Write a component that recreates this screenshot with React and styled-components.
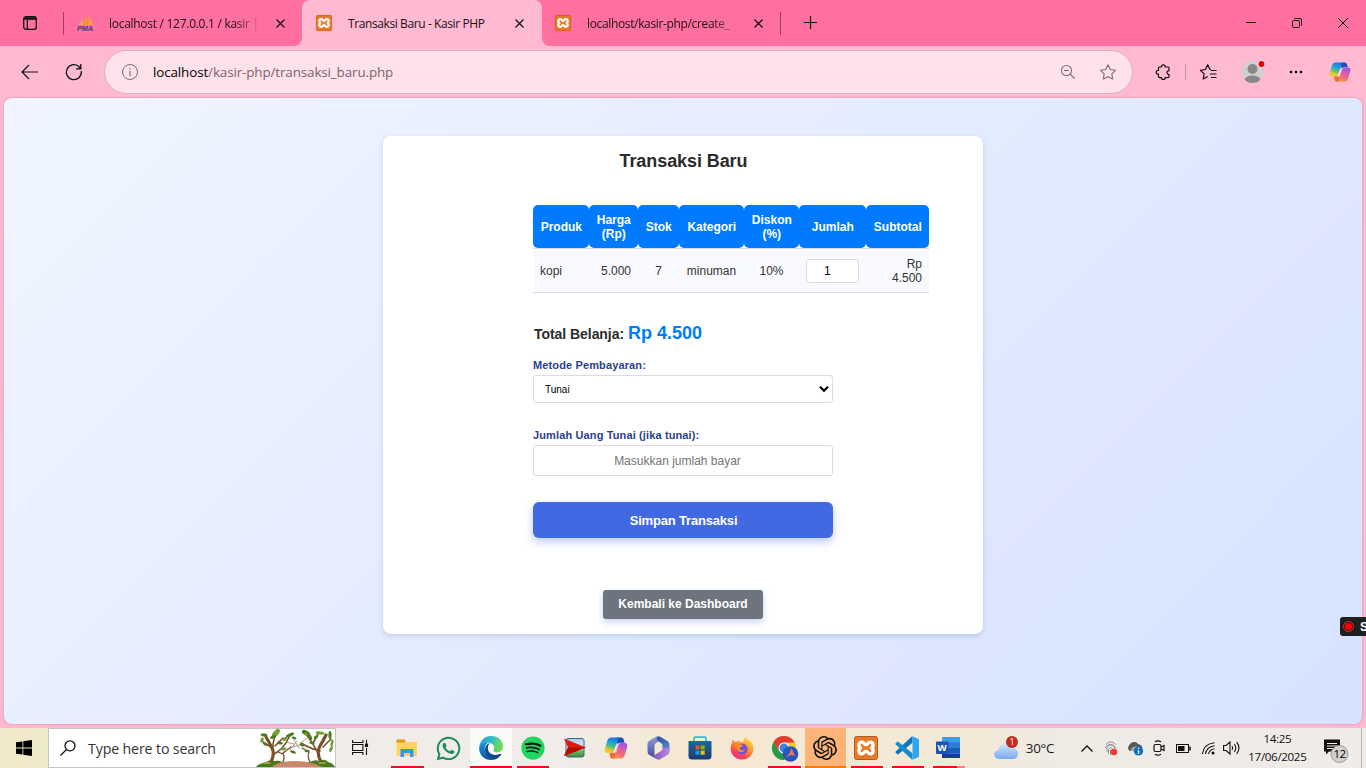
import React from "react";
import styled, { createGlobalStyle, css } from "styled-components";
import { FaWhatsapp, FaSpotify } from "react-icons/fa";
import { SiOpenai } from "react-icons/si";

const Global = createGlobalStyle`
  *, *::before, *::after { box-sizing: border-box; }
  html, body { margin: 0; padding: 0; overflow: hidden; }
  body { font-family: "Liberation Sans", Arial, sans-serif; }
  svg { display: block; flex: none; overflow: visible; }
`;

const ui = css`font-family: "Open Sans", "Noto Sans", sans-serif;`;

const Screen = styled.div`
  position: relative;
  width: 1366px;
  height: 768px;
  display: flex;
  flex-direction: column;
  overflow: hidden;
  background: #ffb9d0;
`;

/* ---------- browser chrome ---------- */
const TitleBar = styled.div`
  ${ui}
  height: 46px;
  flex: none;
  display: flex;
  background: linear-gradient(90deg, #ff6f9f 0 290px, #ffb9d0 290px 560px, #ff6f9f 560px);
`;
const TabMenu = styled.div`
  width: 64px;
  padding: 16px 0 0 23px;
  background: linear-gradient(#9c4562, #9c4562) 63px 12px / 1px 23px no-repeat #ff6f9f;
`;
const Tab = styled.div`
  width: ${(p) => p.$w}px;
  height: 46px;
  display: flex;
  align-items: center;
  padding: 0 14px 0 ${(p) => p.$pl}px;
  font-size: 12px;
  color: #1b1116;
  background: ${(p) => (p.$active ? "#ffb9d0" : "#ff6f9f")};
  border-radius: ${(p) => p.$radius || "0"};
`;
const ActiveBack = styled.div`
  background: #ff6f9f;
`;
const TabTitle = styled.span`
  width: 148px;
  margin-left: ${(p) => p.$ml || 16}px;
  white-space: nowrap;
  letter-spacing: ${(p) => p.$ls || 0}px;
  ${(p) => p.$fade && "mask-image: linear-gradient(90deg, #000 125px, transparent 154px);"}
`;
const TabClose = styled.span`
  margin-left: auto;
  padding-right: ${(p) => p.$pr || 0}px;
`;
const NewTab = styled.div`
  width: 62px;
  padding: 16px 0 0 24px;
  background: linear-gradient(#9c4562, #9c4562) 0 12px / 1px 23px no-repeat #ff6f9f;
`;
const WindowButtons = styled.div`
  margin-left: auto;
  display: flex;
`;
const WindowButton = styled.div`
  width: 46px;
  display: flex;
  align-items: center;
  justify-content: center;
`;
const Toolbar = styled.div`
  ${ui}
  height: 52px;
  flex: none;
  display: flex;
  align-items: center;
  padding: 0 14px 0 20px;
`;
const NavIcons = styled.div`
  width: 84px;
  display: flex;
  gap: 26px;
`;
const AddressBar = styled.div`
  width: 1029px;
  height: 44px;
  display: flex;
  align-items: center;
  padding: 0 16px;
  border: 1px solid #d6b3c0;
  border-radius: 22px;
  background: #ffe1ea;
`;
const Url = styled.span`
  margin-left: 15px;
  flex: 1;
  font-size: 13.4px;
  letter-spacing: -0.11px;
  color: #77666c;
  b { font-weight: 400; color: #000; }
`;
const AddressIcons = styled.div`
  display: flex;
  gap: 23px;
`;
const ToolIcons = styled.div`
  flex: 1;
  display: flex;
  align-items: center;
  padding-left: 21px;
`;
const ToolDivider = styled.div`
  width: 1px;
  height: 16px;
  margin: 0 14px 0 13px;
  background: #d58ca5;
`;
const ToolItem = styled.div`
  margin-left: ${(p) => p.$ml}px;
`;

/* ---------- page ---------- */
const Viewport = styled.main`
  width: 1358px;
  height: 626px;
  flex: none;
  margin-left: 4px;
  padding-top: 38px;
  display: flex;
  justify-content: center;
  align-items: flex-start;
  border-radius: 8px;
  background: linear-gradient(135deg, #f0f5ff, #d6e2ff);
  box-shadow: 0 0 2px rgba(150, 70, 110, 0.5);
`;
const Card = styled.section`
  width: 600px;
  height: 498px;
  display: flex;
  flex-direction: column;
  align-items: center;
  border-radius: 8px;
  background: #fff;
  box-shadow: 0 2px 5px rgba(60, 80, 130, 0.2);
`;
const Title = styled.h1`
  margin: 14px 0 0 1px;
  font-size: 18px;
  line-height: 22px;
  letter-spacing: -0.08px;
  color: #2b2b2b;
`;
const Form = styled.div`
  width: 300px;
  margin-top: 33px;
  display: flex;
  flex-direction: column;
`;
const cols = "56px 49px 41px 65px 55px 67px 63px";
const Row = styled.div`
  width: 396px;
  display: grid;
  grid-template-columns: ${cols};
  font-size: 12px;
  line-height: 14px;
  ${(p) =>
    p.$body
      ? "height: 45px; background: #f9faff; border-top: 1px solid #dcdce0; border-bottom: 1px solid #dcdce0; color: #333;"
      : "height: 43px; color: #fff; font-weight: 700;"}
`;
const HeadCell = styled.div`
  display: flex;
  align-items: center;
  justify-content: center;
  padding-left: 0.6px;
  text-align: center;
  border-radius: 5px;
  background: #007bff;
`;
const Cell = styled.div`
  display: flex;
  align-items: center;
  padding: 0 7px;
  justify-content: ${(p) => p.$align || "center"};
  text-align: right;
`;
const Quantity = styled.div`
  width: 53px;
  height: 24px;
  flex: none;
  padding-left: 17px;
  line-height: 22px;
  text-align: left;
  border: 1px solid #dcdcdc;
  border-radius: 3px;
  background: #fff;
  color: #000;
`;
const Total = styled.div`
  margin: 29px 0 0 1px;
  font-size: 14px;
  line-height: 22px;
  font-weight: 700;
  letter-spacing: -0.05px;
  color: #2b2b2b;
  white-space: nowrap;
  span { font-size: 18px; color: #007bff; letter-spacing: 0; }
`;
const Label = styled.div`
  margin-top: ${(p) => p.$mt}px;
  height: 14px;
  font-size: 11px;
  line-height: 14px;
  font-weight: 700;
  letter-spacing: 0.13px;
  color: #2a3f8f;
`;
const Field = styled.div`
  height: ${(p) => p.$h}px;
  margin-top: 3px;
  display: flex;
  align-items: center;
  border: 1px solid #dcdcdc;
  border-radius: 3px;
  background: #fff;
`;
const Select = styled(Field)`
  justify-content: space-between;
  padding: 0 3px 0 11px;
  font-size: 10px;
  color: #000;
`;
const Input = styled(Field)`
  justify-content: center;
  padding-right: 11px;
  font-size: 12px;
  color: #757575;
`;
const Submit = styled.div`
  height: 36px;
  margin-top: 26px;
  padding-left: 1px;
  line-height: 37px;
  text-align: center;
  font-size: 13px;
  font-weight: 700;
  letter-spacing: -0.18px;
  color: #fff;
  border-radius: 6px;
  background: #4169e1;
  box-shadow: 0 4px 8px rgba(65, 105, 225, 0.35);
`;
const Back = styled.div`
  width: 160px;
  height: 29px;
  margin-top: 52px;
  line-height: 28px;
  text-align: center;
  font-size: 12px;
  font-weight: 700;
  color: #fff;
  border-radius: 3px;
  background: #6c757d;
  box-shadow: 0 3px 7px rgba(65, 105, 225, 0.3);
`;
const Recorder = styled.div`
  position: absolute;
  left: 1340px;
  top: 617px;
  width: 32px;
  height: 19px;
  display: flex;
  align-items: center;
  gap: 6px;
  padding-left: 3px;
  border-radius: 3px;
  background: #1f1f1f;
  color: #fff;
  font-size: 12px;
  font-weight: 700;
`;

/* ---------- taskbar ---------- */
const Taskbar = styled.footer`
  ${ui}
  height: 40px;
  margin-top: 4px;
  flex: none;
  display: flex;
  background: linear-gradient(90deg, #efe9c9 0, #efe9cc 48px, #f0ece8 300px, #f1ece9 570px, #f5e9d4 670px, #f4e9d6 960px, #eeebe5 1060px, #efece9 100%);
`;
const Start = styled.div`
  width: 48px;
  flex: none;
  padding: 12px 0 0 16px;
`;
const Search = styled.div`
  width: 288px;
  flex: none;
  display: flex;
  align-items: center;
  border: 1px solid #c6c5c6;
  background: #fff;
  padding-left: 11px;
`;
const SearchText = styled.span`
  margin-left: 12px;
  font-size: 14.2px;
  letter-spacing: -0.14px;
  color: #333;
  white-space: nowrap;
  flex: 1;
`;
const TaskView = styled.div`
  width: 50px;
  flex: none;
  padding: 12px 0 0 16px;
`;
const Apps = styled.div`
  display: flex;
  flex: none;
`;
const AppButton = styled.div`
  position: relative;
  width: ${(p) => (p.$narrow ? 41 : 41.9)}px;
  flex: none;
  height: 40px;
  display: flex;
  align-items: center;
  justify-content: center;
  background: ${(p) => p.$bg || "transparent"};
`;
const Underline = styled.div`
  position: absolute;
  bottom: 0;
  left: ${(p) => (p.$full ? 0 : 5)}px;
  width: ${(p) => (p.$full ? "100%" : "32.5px")};
  height: 2px;
  background: ${(p) => p.$c || "#e81123"};
`;
const Tray = styled.div`
  display: flex;
  flex: 1;
  align-items: center;
`;
const TrayItem = styled.div`
  width: ${(p) => p.$w}px;
  display: flex;
  align-items: center;
  justify-content: ${(p) => p.$align || "center"};
  flex: none;
`;
const Temp = styled.div`
  width: 55.6px;
  flex: none;
  padding-left: 6.5px;
  font-size: 13.4px;
  letter-spacing: -0.3px;
  color: #1a1a1a;
  white-space: nowrap;
`;
const Clock = styled.div`
  width: 69px;
  flex: none;
  text-align: center;
  font-size: 11.6px;
  line-height: 18px;
  padding-bottom: 1px;
  letter-spacing: -0.34px;
  color: #111;
`;
const ShowDesktop = styled.div`
  flex: 1;
  height: 40px;
  border-left: 1px solid #b9b6b3;
`;

const Line = ({ w = 16, h = 16, c = "#111", s = 1, children }) => (
  <svg width={w} height={h} viewBox={`0 0 ${w} ${h}`} fill="none" stroke={c} strokeWidth={s}>
    {children}
  </svg>
);

const CloseIcon = () => (
  <Line w={9} h={9} s={1.2}><path d="M.5.5l8 8M8.5.5l-8 8" /></Line>
);

const XamppIcon = ({ size }) => (
  <svg width={size} height={size} viewBox="0 0 24 24">
    <defs>
      <linearGradient id="xa" x2="0" y2="1"><stop stopColor="#d77936" /><stop offset=".3" stopColor="#f57c20" /><stop offset="1" stopColor="#e87824" /></linearGradient>
    </defs>
    <rect x=".5" y=".5" width="23" height="23" rx="2" fill="url(#xa)" stroke="#b65b1d" />
    <path d="M8 6.200c2.600 0 1.800 2.500 4 2.500s1.400-2.500 4-2.500c3.800 0 3.800 4.300 1.500 5.800 2.300 1.500 2.300 5.800-1.500 5.800-2.600 0-1.800-2.500-4-2.500s-1.400 2.500-4 2.500c-3.800 0-3.800-4.300-1.500-5.800-2.300-1.500-2.300-5.800 1.500-5.800z" fill="none" stroke="#fff" strokeWidth="3.300" strokeLinejoin="round" />
  </svg>
);

const PmaIcon = () => (
  <svg width="17" height="16" viewBox="0 0 17 16">
    <path d="M2 10L6 3v7z" fill="#f1a06a" />
    <path d="M6 10C8 7 8.500 3 8.500 0c2 3 2.500 7 1.500 10z" fill="#f79a1c" />
    <path d="M11 10c1-3 1-5 .5-8 2.500 2 4 5 4.500 8z" fill="#f9a535" />
    <text x="0" y="15.800" fontSize="7.200" fontWeight="700" fontStyle="italic" fontFamily="Liberation Sans" textLength="16" lengthAdjust="spacingAndGlyphs" fill="#4f4880" stroke="#4f4880" strokeWidth=".2">PMA</text>
  </svg>
);

const CopilotIcon = ({ size, id }) => (
  <svg width={size} height={size} viewBox="0 0 24 24">
    <defs>
      <linearGradient id={id + "a"} x1=".6" y1="0" x2=".3" y2="1"><stop stopColor="#1f74d8" /><stop offset=".35" stopColor="#19a5dc" /><stop offset=".6" stopColor="#5cc176" /><stop offset=".85" stopColor="#f5c92c" /></linearGradient>
      <linearGradient id={id + "b"} x1=".7" y1="0" x2=".3" y2="1"><stop stopColor="#9a52e8" /><stop offset=".4" stopColor="#dc5bb0" /><stop offset=".75" stopColor="#f9716a" /><stop offset="1" stopColor="#fb9a48" /></linearGradient>
    </defs>
    <path d="M13 1.500h4.300c1.300 0 1.900.8 2.300 2l1 3.300H17c-2 0-3 1-3.500 2.800L12 15z" fill="#1f4fb8" />
    <path d="M7.500 1.500h8.200c-1.500.4-2 1.600-2.500 3.200L10.300 14c-.6 1.900-1.300 3-3.300 3H3.500C1 17 .2 15.200.9 12.800L3.200 4.900C3.900 2.600 5.200 1.500 7.500 1.500z" fill={`url(#${id}a)`} />
    <path d="M5.500 17H8c1.800 0 3-1.200 3.500-2.800L12 13l-.500 9.500H8.500c-1.400 0-2-.8-2.400-2.100z" fill="#ee6a35" />
    <path d="M16.500 22.500H8.800c1.500-.4 2-1.600 2.500-3.200l2.800-9.300c.6-1.900 1.300-3 3.300-3h3.100c2.500 0 3.300 1.800 2.600 4.200l-2.300 7.900c-.7 2.300-2 3.400-4.300 3.400z" fill={`url(#${id}b)`} />
    <path d="M12.500 8.500L10.300 15q-.5 1.500-1.500 2 1.500.2 2.500-.5l2.300-7.300q.5-1.500 1.600-2.200-1.900 0-2.700 1.500z" fill="#fff0e8" />
  </svg>
);

const ExplorerIcon = () => (
  <svg width="22" height="19" viewBox="0 0 22 19">
    <path d="M.5 1h8l1 2H21v14H.5z" fill="#ffd262" /><path d="M.5.500h8l1.200 2-1 1H.5z" fill="#d99a0b" />
    <path d="M4.500 18v-8h13v8h-3.500v-4H8v4z" fill="#3c96dc" />
  </svg>
);
const EdgeIcon = () => (
  <svg width="24" height="24" viewBox="0 0 24 24">
    <defs>
      <linearGradient id="e1" x2="1" y2=".3"><stop stopColor="#1c9be0" /><stop offset=".5" stopColor="#30b9cc" /><stop offset="1" stopColor="#6bdc55" /></linearGradient>
      <linearGradient id="e2" y2="1" x2=".3"><stop stopColor="#1b8fdc" /><stop offset="1" stopColor="#0f5cae" /></linearGradient>
    </defs>
    <path d="M.2 11C1 4.500 6 0 12.200 0 19 0 24 4.800 24 10.500c0 3.500-2.700 5.900-6 5.900-2.200 0-3.700-.9-3.700-1.800 0-.7 1-1.100 1-2.800 0-2.600-2.700-5-6.300-5C5 6.800 2 8.200.2 11z" fill="url(#e1)" />
    <path d="M.2 11C2 7.500 5.500 6.300 9 6.800c-2 1-3.300 3.200-3.300 6 0 5 3.800 8.500 8.500 10.900C6.200 25.200-.6 19.300.2 11z" fill="url(#e2)" />
    <path d="M9 10.500c-1.200 6.500 5 9.500 10 8 1.500-.4 2.800-1 3.200-.5.400.6-3.200 5.700-8 5.700C9.500 22.700 5.700 18 6 13.500 6.200 10 8 7.500 11 7.200c-1.200.7-1.800 2-2 3.300z" fill="#114a8b" />
  </svg>
);
const SpotifyIcon = () => (
  <svg width="24" height="24" viewBox="0 0 24 24">
    <circle cx="12" cy="12" r="11" fill="#111" />
    <FaSpotify size={24} color="#1ed760" />
  </svg>
);
const RedArrowIcon = () => (
  <svg width="22" height="20" viewBox="0 0 22 20">
    <defs><linearGradient id="ra" y2="1" x2="0"><stop stopColor="#a8cdf5" /><stop offset=".55" stopColor="#e3f3fa" /><stop offset=".65" stopColor="#79bd68" /><stop offset="1" stopColor="#398b37" /></linearGradient></defs>
    <rect x="2" y=".5" width="18" height="18.500" rx="2" fill="url(#ra)" stroke="#426681" />
    <path d="M0 .5L22 9.500 0 18l4-8.500z" fill="#df1d0b" /><path d="M4 9.500h18L0 18z" fill="#b50d04" />
  </svg>
);
const M365Icon = () => (
  <svg width="23" height="24" viewBox="0 0 23 24">
    <defs>
      <linearGradient id="m1" y2="1" x2="0"><stop stopColor="#8fa0d4" /><stop offset=".5" stopColor="#6d78c0" /><stop offset="1" stopColor="#474f9f" /></linearGradient>
      <linearGradient id="m2" x2="1"><stop stopColor="#7a4cb0" /><stop offset="1" stopColor="#b98ae0" /></linearGradient>
      <linearGradient id="m3" y2="1" x2=".5"><stop stopColor="#2b4f9c" /><stop offset="1" stopColor="#5a86cf" /></linearGradient>
    </defs>
    <path d="M9 .8L2.500 4.500Q.5 5.800.5 8v7.500Q.5 18 2.500 19l3 1.500Q7.500 21 7.500 19V9.500Q7.500 8 9 7l7-4.500L13 .8Q11-.2 9 .8z" fill="url(#m1)" />
    <path d="M13 .8L20.500 5Q22.500 6 22.500 8.500V15.500L15.500 12V9.500Q15.500 8.300 14.500 7.600L11 5Q8.500 3 10.500.4z" fill="url(#m3)" />
    <path d="M22.500 12.500v3Q22.500 18 20.500 19l-7.300 4.300q-1.700.9-3.400 0L3 19.500q3 1 5-.7l6-3.800q1.500-.8 1.500-2.500v-1z" fill="url(#m2)" />
  </svg>
);
const StoreIcon = () => (
  <svg width="24" height="24" viewBox="0 0 24 24">
    <defs><linearGradient id="st" y2="1" x2="0"><stop stopColor="#1f64a2" /><stop offset="1" stopColor="#183d6b" /></linearGradient></defs>
    <path d="M6 8V2.500Q6 1.200 7.300 1.200h9.400Q18 1.200 18 2.500V8" fill="none" stroke="#38b6ea" strokeWidth="1.700" />
    <path d="M.5 5h23v15q0 3.500-3.500 3.500H4Q.5 23.500.5 20z" fill="url(#st)" />
    <path d="M7.500 9.500h4v4h-4z" fill="#f25022" /><path d="M12.700 9.500h4v4h-4z" fill="#7fba00" /><path d="M7.500 14.700h4v4h-4z" fill="#00a4ef" /><path d="M12.700 14.700h4v4h-4z" fill="#ffb900" />
  </svg>
);
const FirefoxIcon = () => (
  <svg width="24" height="24" viewBox="0 0 24 24">
    <defs><linearGradient id="ff" x1=".8" y1="0" x2=".2" y2="1"><stop stopColor="#ffe34d" /><stop offset=".4" stopColor="#ff9a2b" /><stop offset=".75" stopColor="#ff4650" /><stop offset="1" stopColor="#e3189b" /></linearGradient></defs>
    <path d="M16 .5c.3 2 3 4 4 5 .2-.5.1-1 0-1.500 4.500 5 4.500 12 .5 16-5 5-13 4.500-17.300-.5C-.3 15.500.4 10 2.200 6.500L2.800 3.500 5 6l4.500-1C11 5.500 12 6 13 7c.2-2.500 1.200-5 3-6.500z" fill="url(#ff)" />
    <circle cx="12" cy="13" r="5.600" fill="#7651d8" />
    <path d="M4 8.500C7 6.800 8.500 8.500 11.500 8.600c1 .1 1.500.6 1.300 1.200-.3 1.200-2.800 1-2.800 2.700 0 2 3 2.500 5 .9C14 17 9 16.800 7 14 5.500 12 5.500 10.500 4 8.500z" fill="#ff8b22" />
  </svg>
);
const ChromeIcon = () => (
  <svg width="24" height="24" viewBox="0 0 24 24">
    <circle cx="12" cy="12" r="12" fill="#fbc72e" />
    <path d="M1.600 6A12 12 0 0 0 12 24l5-9-5-3L6.800 15z" fill="#249a4b" />
    <path d="M1.600 6A12 12 0 0 1 22.600 6.500H12L6.800 15z" fill="#e23b30" />
    <circle cx="12" cy="12" r="5.500" fill="#fff" /><circle cx="12" cy="12" r="4.400" fill="#3c7fe6" />
    <circle cx="18.500" cy="18" r="7.800" fill="#2456bd" />
    <path d="M19.500 12l3.500 8-4-1-5 2.500 4-5z" fill="#f0705f" />
  </svg>
);
const VscodeIcon = () => (
  <svg width="24" height="24" viewBox="0 0 24 24">
    <path d="M17.500.3v6.500L3.300 18.200q-.5.400-1 0l-1.600-1.500q-.6-.6 0-1.200L16.500.7q.5-.5 1-.4z" fill="#0b78bb" />
    <path d="M17.500 23.700v-6.500L3.300 5.800q-.5-.4-1 0L.7 7.300q-.6.600 0 1.200l15.800 14.800q.5.500 1 .4z" fill="#168dd2" />
    <path d="M17.500.2l5.500 2.500q1 .5 1 1.500v15.600q0 1-1 1.500l-5.500 2.500z" fill="#2da8ee" />
  </svg>
);
const WordIcon = () => (
  <svg width="24" height="22" viewBox="0 0 24 22">
    <path d="M6 0h18v6H6z" fill="#3c9fe4" /><path d="M6 5.500h18v5.500H6z" fill="#2b7cd3" /><path d="M6 11h18v5.500H6z" fill="#195abd" /><path d="M6 16.500h18V21H6z" fill="#123f91" />
    <rect x="0" y="4.500" width="12.500" height="12.500" rx="1" fill="#1b55b5" />
    <text x="6.200" y="14.300" textAnchor="middle" fontSize="9.500" fontWeight="700" fontFamily="Open Sans" fill="#fff">W</text>
  </svg>
);

const LEAVES = [
  [20, 4, 5, 2.6, -50], [17, 8, 3, 1.6, -20], [8, 6, 3.5, 1.4, 10], [6, 11, 1.6, 2.6, 20], [9, 15, 2.6, 1.4, 40], [34, 6, 4.5, 1.7, -25],
  [29, 10, 2.6, 1.5, -40], [24, 14, 2.8, 1.5, 10], [38, 9, 2.5, 1.2, 20], [28, 20, 2.6, 1.3, -20],
  [50, 4, 4.5, 2.4, 30], [54, 8, 3.2, 1.7, 60], [64, 4, 4.5, 1.6, 5], [60, 8, 2.6, 1.4, -30], [74, 6, 1.6, 4, 0], [76, 14, 1.4, 3.5, 10],
  [56, 14, 2.8, 1.4, 15], [46, 16, 2.6, 1.3, 20], [75, 20, 1.5, 3.2, 20], [51, 22, 2.6, 1.2, 0], [37, 23, 3, 1.4, 20],
];
const TreesArt = () => (
  <svg width="79" height="38" viewBox="0 0 79 38">
    <path d="M0 38q3-4 9-4 4-4 9-2 5-1 8 1h28q5-3 9-1 6-3 9 1 5 1 7 5z" fill="#477a1c" />
    <path d="M16 38q6-6 23-6t27 6z" fill="#c88869" />
    <g fill="none" stroke="#7b512c" strokeLinecap="round">
      <path d="M15 33Q19 25 16 19T10 8" strokeWidth="3.200" /><path d="M17 23Q16 14 20 5M18 25q10-5 15-17M15 18L7 13M19 17l8-8" strokeWidth="1.600" />
      <path d="M65 33q-5-9-1-16t6-11" strokeWidth="3.200" /><path d="M62 24Q57 14 50 5M64 22q-9-2-19-8M67 18l8-8M57 14l5-9" strokeWidth="1.600" />
      <path d="M27 33q2-5 0-9l8-6M27 25l-5-2M54 33q-3-5-1-10l-7-4" strokeWidth="1.300" />
      <path d="M34 21l7-9M43 19l-5-8M30 13l8 2M46 13l5-4M36 18l8-2" strokeWidth=".9" stroke="#a58b78" />
    </g>
    {LEAVES.map(([x, y, rx, ry, a], i) => (
      <ellipse key={i} cx={x} cy={y} rx={rx} ry={ry} transform={`rotate(${a} ${x} ${y})`} fill={i % 3 ? "#4a7d22" : "#6f9f2c"} />
    ))}
    <g fill="#8dae35"><circle cx="20" cy="3" r="1.200" /><circle cx="50" cy="5" r="1.200" /><ellipse cx="11" cy="34" rx="4" ry="1" /><ellipse cx="66" cy="34" rx="4" ry="1" /></g>
  </svg>
);

const HEADS = [["Produk"], ["Harga", "(Rp)"], ["Stok"], ["Kategori"], ["Diskon", "(%)"], ["Jumlah"], ["Subtotal"]];

const APPS = [
  { icon: <ExplorerIcon />, line: true },
  { icon: <FaWhatsapp size={27} color="#1c8c57" /> },
  { icon: <EdgeIcon />, line: true, full: true, bg: "#fafaf9" },
  { icon: <SpotifyIcon />, line: true },
  { icon: <RedArrowIcon /> },
  { icon: <CopilotIcon size={24} id="ct" /> },
  { icon: <M365Icon /> },
  { icon: <StoreIcon /> },
  { icon: <FirefoxIcon /> },
  { icon: <ChromeIcon />, line: true },
  { icon: <SiOpenai size={24} color="#111" />, line: true, full: true, bg: "#fdb478", c: "#ff7a00", narrow: true },
  { icon: <XamppIcon size={24} />, line: true, narrow: true },
  { icon: <VscodeIcon />, line: true, narrow: true },
  { icon: <WordIcon />, line: true, narrow: true, c: "linear-gradient(90deg, #e81123 0 24px, #f08090 24px)" },
];

export default function App() {
  return (
    <Screen>
      <Global />
      <TitleBar>
        <TabMenu>
          <Line w={14} h={14} s={1.3}><rect x=".7" y=".7" width="12.600" height="12.600" rx="2.200" /><path d="M1 2.500h12" strokeWidth="2.500" /><path d="M4.300 4v9" /></Line>
        </TabMenu>
        <Tab $w={238} $pl={13} $radius="0 0 8px 0">
          <PmaIcon />
          <TabTitle $ml={15} $ls={-0.28} $fade>localhost / 127.0.0.1 / kasir |</TabTitle>
          <TabClose $pr={3}><CloseIcon /></TabClose>
        </Tab>
        <ActiveBack>
          <Tab $active $w={240} $pl={14} $radius="8px 8px 0 0">
            <XamppIcon size={16} />
            <TabTitle $ml={16} $ls={-0.4}>Transaksi Baru - Kasir PHP</TabTitle>
            <TabClose $pr={4}><CloseIcon /></TabClose>
          </Tab>
        </ActiveBack>
        <Tab $w={238} $pl={13} $radius="0 0 0 8px">
          <XamppIcon size={16} />
          <TabTitle $ls={-0.35} $fade>localhost/kasir-php/create_</TabTitle>
          <TabClose $pr={3}><CloseIcon /></TabClose>
        </Tab>
        <NewTab><Line w={13} h={13} s={1.2}><path d="M6.500 0v13M0 6.500h13" /></Line></NewTab>
        <WindowButtons>
          <WindowButton><Line w={10} h={10}><path d="M0 4.500h10" /></Line></WindowButton>
          <WindowButton><Line w={10} h={10}><rect x=".5" y="2.500" width="7" height="7" rx="1" /><path d="M2.500.5h5.500q1.500 0 1.500 1.500v5.500" /></Line></WindowButton>
          <WindowButton><Line w={10} h={10}><path d="M0 0l10 10M10 0L0 10" /></Line></WindowButton>
        </WindowButtons>
      </TitleBar>

      <Toolbar>
        <NavIcons>
          <Line w={18} h={16} s={1.2}><path d="M18 8H2M9 1L2 8l7 7" /></Line>
          <Line w={18} h={16} s={1.3}><path d="M17.300 7.200A7.500 7.500 0 1 1 14.500 2.300L16.500 4.500M16.800 0v4.800H12" /></Line>
        </NavIcons>
        <AddressBar>
          <Line w={17} c="#806d74"><circle cx="9" cy="8" r="7.500" /><path d="M9 7v5M9 4.200v1.300" strokeWidth="1.200" /></Line>
          <Url><b>localhost</b>/kasir-php/transaksi_baru.php</Url>
          <AddressIcons>
            <Line c="#806d74" s={1.1} w={17}><circle cx="6.500" cy="6.500" r="5" /><path d="M10 10l4.500 4.500M4 6.500h5" /></Line>
            <Line c="#806d74" s={1.1}><path d="M8 .8l2.300 4.700 5.200.8-3.700 3.600.9 5.200L8 12.700l-4.700 2.400.9-5.200L.5 6.300l5.200-.8z" strokeLinejoin="round" /></Line>
          </AddressIcons>
        </AddressBar>
        <ToolIcons>
          <ToolItem $ml={1}>
            <Line w={17} s={1.2}><path d="M4.500 3H6.500C6.300 1.500 7 .800 8.300.800s2 .7 1.800 2.200h2.900q1 0 1 1v2.800c-2.600-.4-2.600 3.900 0 3.500v2.300q0 1-1 1h-2.900c.2 1.200-.5 1.900-1.800 1.900s-2-.7-1.800-1.900h-2q-1 0-1-1v-2.400C2 10.300 1.200 9.500 1.200 8.300s.8-2 2.300-1.800V4q0-1 1-1z" strokeLinejoin="round" /></Line>
          </ToolItem>
          <ToolDivider />
          <Line w={18} s={1.2}><path d="M11 5.800L10 5.500 7.700.8 5.400 5.500l-4.900.8 3.600 3.600-.9 5.200 4.500-2.500M11 6.500h5.500M10 10h6.500M11 13.500h5.500" strokeLinejoin="round" /></Line>
          <ToolItem $ml={22.5}>
            <svg width="24" height="24" viewBox="0 0 24 24">
              <circle cx="11.500" cy="12" r="11" fill="#d2d0ce" />
              <circle cx="11.500" cy="9" r="5" fill="#8a8886" /><path d="M3.500 19.500q2-4 8-4t8 4q-3 3.500-8 3.500t-8-3.500z" fill="#8a8886" />
              <circle cx="20.500" cy="4" r="3.600" fill="#e3000f" stroke="#ffe1ea" />
            </svg>
          </ToolItem>
          <ToolItem $ml={24.5}>
            <svg width="14" height="4" viewBox="0 0 14 4"><circle cx="2" cy="2" r="1.300" /><circle cx="7" cy="2" r="1.300" /><circle cx="12" cy="2" r="1.300" /></svg>
          </ToolItem>
          <ToolItem $ml={26}><CopilotIcon size={22} id="cb" /></ToolItem>
        </ToolIcons>
      </Toolbar>

      <Viewport>
        <Card>
          <Title>Transaksi Baru</Title>
          <Form>
            <Row>
              {HEADS.map((h) => (
                <HeadCell key={h[0]}>{h[0]}{h[1] && <><br />{h[1]}</>}</HeadCell>
              ))}
            </Row>
            <Row $body>
              <Cell $align="flex-start">kopi</Cell>
              <Cell $align="flex-end">5.000</Cell>
              <Cell>7</Cell>
              <Cell>minuman</Cell>
              <Cell>10%</Cell>
              <Cell><Quantity>1</Quantity></Cell>
              <Cell $align="flex-end">Rp<br />4.500</Cell>
            </Row>
            <Total>Total Belanja: <span>Rp 4.500</span></Total>
            <Label $mt={13}>Metode Pembayaran:</Label>
            <Select $h={28}>
              Tunai
              <Line w={10} h={6} s={2.2} c="#000"><path d="M1 .8l4 4 4-4" /></Line>
            </Select>
            <Label $mt={25}>Jumlah Uang Tunai (jika tunai):</Label>
            <Input $h={31}>Masukkan jumlah bayar</Input>
            <Submit>Simpan Transaksi</Submit>
          </Form>
          <Back>Kembali ke Dashboard</Back>
        </Card>
      </Viewport>

      <Taskbar>
        <Start>
          <svg width="16" height="16" viewBox="0 0 16 16"><path d="M0 2.300L6.500 1.400v6.200H0zM7.300 1.300L16 0v7.600H7.300zM0 8.400h6.500v6.200L0 13.700zM7.300 8.400H16V16l-8.700-1.300z" /></svg>
        </Start>
        <Search>
          <Line w={16} s={1.3}><circle cx="10" cy="5.800" r="5" /><path d="M6.500 9.500L.5 15.500" /></Line>
          <SearchText>Type here to search</SearchText>
          <TreesArt />
        </Search>
        <TaskView>
          <Line w={16} h={15} s={1.1}><path d="M.6 0v2.500h10.300V0M.6 15v-2.500h10.300V15M.6 4.500h10.300v6H.6zM14.500 0v3M14.500 8v7" /><rect x="13.500" y="4" width="2" height="2.500" fill="#111" /></Line>
        </TaskView>
        <Apps>
          {APPS.map((a, i) => (
            <AppButton key={i} $bg={a.bg} $narrow={a.narrow}>
              {a.icon}
              {a.line && <Underline $full={a.full} $c={a.c} />}
            </AppButton>
          ))}
        </Apps>
        <Tray>
          <TrayItem $w={50.4} $align="flex-end">
            <svg width="25" height="24" viewBox="0 0 25 24">
              <defs><linearGradient id="cl" y2="1" x2="0"><stop stopColor="#d4e6ff" /><stop offset="1" stopColor="#79a9ef" /></linearGradient></defs>
              <path d="M5 23a4.500 4.500 0 0 1-.5-9C5 9.500 8 7.500 11 7.500c3.500 0 5.500 2 6.500 5 4-.8 6.500 2 6.500 5 0 3.200-2 5.500-5 5.500z" fill="url(#cl)" />
              <circle cx="18" cy="6" r="6" fill="#c52b1e" />
              <text x="18" y="9.300" textAnchor="middle" fontSize="9" fontFamily="Open Sans" fill="#fff">1</text>
            </svg>
          </TrayItem>
          <Temp>30°C</Temp>
          <TrayItem $w={24}><Line w={12} h={7} s={1.3}><path d="M.5 6.500L6 1l5.500 5.500" /></Line></TrayItem>
          <TrayItem $w={25}>
            <Line w={14} h={16} c="#8b8d92"><path d="M2 4.500Q6.500-1 11.500 4.500M1 8q5.500-7.500 11 0M3 11.500Q2 5 6.500 5t4.500 5M4.500 13.500Q4 8 6.500 7.500 9 8 8.500 11M6.500 10v5" /><circle cx="10" cy="12" r="3.200" fill="#fa352c" stroke="none" /></Line>
          </TrayItem>
          <TrayItem $w={23}>
            <svg width="16" height="15" viewBox="0 0 16 15"><path d="M3 10A3.500 3.500 0 0 1 2 4.500C4 .5 9 0 11 3c2.500.2 4.500 2 4.500 4.500L8 10z" fill="#55585c" /><path d="M3.500 10q1-5 6-4.500l3 2-5 3z" fill="#aaa" /><circle cx="11.500" cy="10" r="4.600" fill="#0c6cc9" /><path d="M11.500 9.200v3.800M11.500 6.800v1.300" stroke="#fff" strokeWidth="1.400" /></svg>
          </TrayItem>
          <TrayItem $w={25}><Line w={12} h={16} s={1.2}><rect x="1" y="4.500" width="7" height="7" rx="1.500" /><path d="M8 7l3-1.500v5L8 9M2 1.800q3-2 6 0M2 14.200q3 2 6 0" /></Line></TrayItem>
          <TrayItem $w={24}><Line w={15} h={9}><rect x=".5" y=".5" width="12" height="8" /><rect x="2" y="2" width="6.500" height="5" fill="#111" stroke="none" /><path d="M14 2.500v4" strokeWidth="1.500" /></Line></TrayItem>
          <TrayItem $w={25}><Line w={13} h={13} s={1.1}><path d="M.5 12Q1.500 2 12.500.8M3.500 12Q4.500 5 12.500 3.800M6.500 12Q7.500 7.500 12.500 6.800" /><circle cx="11" cy="11" r="1.500" fill="#111" stroke="none" /></Line></TrayItem>
          <TrayItem $w={22}><Line w={17} h={14} s={1.1}><path d="M.6 4.500h2.500L7 1v12L3.100 9.500H.6zM9 5q1.500 2 0 4M11.300 3q3 4 0 8M13.700 1.200q4.500 5.800 0 11.600" /></Line></TrayItem>
          <Clock>14:25<br />17/06/2025</Clock>
          <TrayItem $w={49}>
            <svg width="25" height="24" viewBox="0 0 25 24">
              <path d="M0 3.500h16v12H5l-3 3v-3H0z" fill="#111" /><path d="M3 7.500h10M3 10h10M3 12.500h6" stroke="#efece9" />
              <circle cx="15.500" cy="18" r="8.500" fill="#d2d0ce" stroke="#9b9a99" />
              <text x="15.500" y="22.300" textAnchor="middle" fontSize="11.500" letterSpacing="-.5" fontFamily="Open Sans" fill="#000">12</text>
            </svg>
          </TrayItem>
          <ShowDesktop />
        </Tray>
      </Taskbar>
      <Recorder>
        <svg width="11" height="11" viewBox="0 0 11 11"><circle cx="5.500" cy="5.500" r="5" fill="none" stroke="#d33" /><circle cx="5.500" cy="5.500" r="3.600" fill="#f00" /></svg>
        S
      </Recorder>
    </Screen>
  );
}
